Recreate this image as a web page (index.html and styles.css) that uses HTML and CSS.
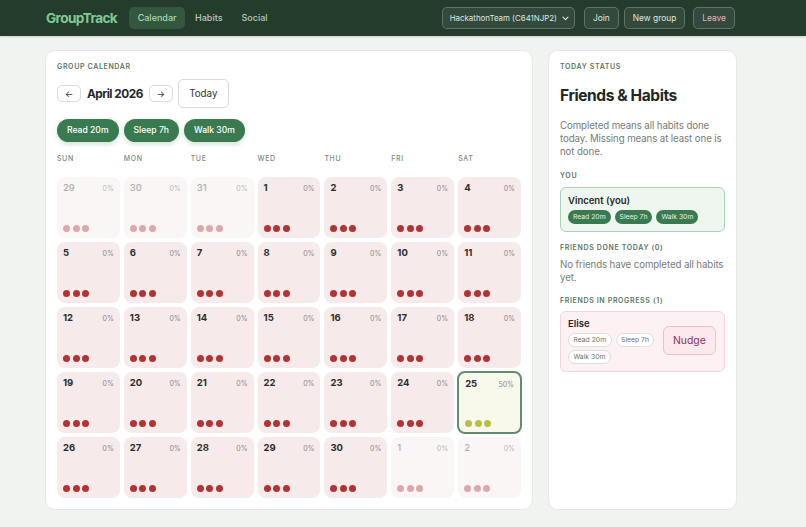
FILE: index.html
```html
<!DOCTYPE html>
<html lang="en">
<head>
<meta charset="utf-8">
<title>GroupTrack</title>
<link rel="stylesheet" href="styles.css">
</head>
<body>
<header class="topbar">
  <div class="wrap topbar-inner">
    <div class="brand-nav">
      <span class="brand">GroupTrack</span>
      <nav class="tabs">
        <span class="tab active">Calendar</span>
        <span class="tab">Habits</span>
        <span class="tab">Social</span>
      </nav>
    </div>
    <div class="actions">
      <span class="select">HackathonTeam (C641NJP2)
        <svg class="chev" width="7" height="5" viewBox="0 0 7 5"><path d="M1 1.2 L3.5 3.7 L6 1.2" fill="none" stroke="#d6e2d9" stroke-width="1.2" stroke-linecap="round" stroke-linejoin="round"/></svg>
      </span>
      <span class="tbtn">Join</span>
      <span class="tbtn">New group</span>
      <span class="tbtn leave">Leave</span>
    </div>
  </div>
</header>

<main class="wrap main">
  <section class="card cal">
    <div class="label">Group calendar</div>
    <div class="monthrow">
      <span class="arrow">&larr;</span>
      <span class="month">April 2026</span>
      <span class="arrow">&rarr;</span>
      <span class="today-btn">Today</span>
    </div>
    <div class="habits">
      <span class="hpill">Read 20m</span>
      <span class="hpill">Sleep 7h</span>
      <span class="hpill">Walk 30m</span>
    </div>
    <div class="dow">
      <span>Sun</span><span>Mon</span><span>Tue</span><span>Wed</span><span>Thu</span><span>Fri</span><span>Sat</span>
    </div>
    <div class="grid">
      <div class="cell other"><div class="ctop"><b>29</b><i>0%</i></div><div class="dots"><s></s><s></s><s></s></div></div>
      <div class="cell other"><div class="ctop"><b>30</b><i>0%</i></div><div class="dots"><s></s><s></s><s></s></div></div>
      <div class="cell other"><div class="ctop"><b>31</b><i>0%</i></div><div class="dots"><s></s><s></s><s></s></div></div>
      <div class="cell"><div class="ctop"><b>1</b><i>0%</i></div><div class="dots"><s></s><s></s><s></s></div></div>
      <div class="cell"><div class="ctop"><b>2</b><i>0%</i></div><div class="dots"><s></s><s></s><s></s></div></div>
      <div class="cell"><div class="ctop"><b>3</b><i>0%</i></div><div class="dots"><s></s><s></s><s></s></div></div>
      <div class="cell"><div class="ctop"><b>4</b><i>0%</i></div><div class="dots"><s></s><s></s><s></s></div></div>

      <div class="cell"><div class="ctop"><b>5</b><i>0%</i></div><div class="dots"><s></s><s></s><s></s></div></div>
      <div class="cell"><div class="ctop"><b>6</b><i>0%</i></div><div class="dots"><s></s><s></s><s></s></div></div>
      <div class="cell"><div class="ctop"><b>7</b><i>0%</i></div><div class="dots"><s></s><s></s><s></s></div></div>
      <div class="cell"><div class="ctop"><b>8</b><i>0%</i></div><div class="dots"><s></s><s></s><s></s></div></div>
      <div class="cell"><div class="ctop"><b>9</b><i>0%</i></div><div class="dots"><s></s><s></s><s></s></div></div>
      <div class="cell"><div class="ctop"><b>10</b><i>0%</i></div><div class="dots"><s></s><s></s><s></s></div></div>
      <div class="cell"><div class="ctop"><b>11</b><i>0%</i></div><div class="dots"><s></s><s></s><s></s></div></div>

      <div class="cell"><div class="ctop"><b>12</b><i>0%</i></div><div class="dots"><s></s><s></s><s></s></div></div>
      <div class="cell"><div class="ctop"><b>13</b><i>0%</i></div><div class="dots"><s></s><s></s><s></s></div></div>
      <div class="cell"><div class="ctop"><b>14</b><i>0%</i></div><div class="dots"><s></s><s></s><s></s></div></div>
      <div class="cell"><div class="ctop"><b>15</b><i>0%</i></div><div class="dots"><s></s><s></s><s></s></div></div>
      <div class="cell"><div class="ctop"><b>16</b><i>0%</i></div><div class="dots"><s></s><s></s><s></s></div></div>
      <div class="cell"><div class="ctop"><b>17</b><i>0%</i></div><div class="dots"><s></s><s></s><s></s></div></div>
      <div class="cell"><div class="ctop"><b>18</b><i>0%</i></div><div class="dots"><s></s><s></s><s></s></div></div>

      <div class="cell"><div class="ctop"><b>19</b><i>0%</i></div><div class="dots"><s></s><s></s><s></s></div></div>
      <div class="cell"><div class="ctop"><b>20</b><i>0%</i></div><div class="dots"><s></s><s></s><s></s></div></div>
      <div class="cell"><div class="ctop"><b>21</b><i>0%</i></div><div class="dots"><s></s><s></s><s></s></div></div>
      <div class="cell"><div class="ctop"><b>22</b><i>0%</i></div><div class="dots"><s></s><s></s><s></s></div></div>
      <div class="cell"><div class="ctop"><b>23</b><i>0%</i></div><div class="dots"><s></s><s></s><s></s></div></div>
      <div class="cell"><div class="ctop"><b>24</b><i>0%</i></div><div class="dots"><s></s><s></s><s></s></div></div>
      <div class="cell today"><div class="ctop"><b>25</b><i>50%</i></div><div class="dots"><s></s><s></s><s></s></div></div>

      <div class="cell"><div class="ctop"><b>26</b><i>0%</i></div><div class="dots"><s></s><s></s><s></s></div></div>
      <div class="cell"><div class="ctop"><b>27</b><i>0%</i></div><div class="dots"><s></s><s></s><s></s></div></div>
      <div class="cell"><div class="ctop"><b>28</b><i>0%</i></div><div class="dots"><s></s><s></s><s></s></div></div>
      <div class="cell"><div class="ctop"><b>29</b><i>0%</i></div><div class="dots"><s></s><s></s><s></s></div></div>
      <div class="cell"><div class="ctop"><b>30</b><i>0%</i></div><div class="dots"><s></s><s></s><s></s></div></div>
      <div class="cell other"><div class="ctop"><b>1</b><i>0%</i></div><div class="dots"><s></s><s></s><s></s></div></div>
      <div class="cell other"><div class="ctop"><b>2</b><i>0%</i></div><div class="dots"><s></s><s></s><s></s></div></div>
    </div>
  </section>

  <aside class="card side">
    <div class="label">Today status</div>
    <h1 class="title">Friends &amp; Habits</h1>
    <p class="desc">Completed means all habits done today. Missing means at least one is not done.</p>
    <div class="label sub">You</div>
    <div class="me">
      <div class="name">Vincent (you)</div>
      <div class="mini-row">
        <span class="mpill">Read 20m</span>
        <span class="mpill">Sleep 7h</span>
        <span class="mpill">Walk 30m</span>
      </div>
    </div>
    <div class="label sub2">Friends done today (0)</div>
    <p class="desc none">No friends have completed all habits yet.</p>
    <div class="label sub3">Friends in progress (1)</div>
    <div class="friend">
      <div class="finfo">
        <div class="name">Elise</div>
        <div class="opills">
          <span class="opill">Read 20m</span>
          <span class="opill">Sleep 7h</span>
          <span class="opill">Walk 30m</span>
        </div>
      </div>
      <span class="nudge">Nudge</span>
    </div>
  </aside>
</main>
</body>
</html>
```

FILE: styles.css
```css
* { box-sizing: border-box; }
html, body { margin: 0; padding: 0; }
body {
  background: #f1f3f0;
  font-family: Inter, "Noto Sans", sans-serif;
  color: #2a2f2b;
  height: 527px;
  overflow: hidden;
}
.wrap {
  width: 692px;
  margin-left: 45px;
}
.topbar {
  background: #243c2c;
  height: 36px;
  box-shadow: 0 1px 2px rgba(0,0,0,0.15);
}
.topbar-inner {
  height: 36px;
  display: flex;
  align-items: center;
  justify-content: space-between;
  padding-right: 2px;
}
.brand-nav { display: flex; align-items: center; }
.brand {
  color: #7fcb93;
  font-weight: 700;
  font-size: 13.6px;
  letter-spacing: -0.6px;
  margin-left: 1px;
  margin-right: 12px;
}
.tabs { display: flex; align-items: center; gap: 1px; }
.tab {
  font-size: 9px;
  font-weight: 500;
  color: #b9c9bd;
  padding: 0 9px;
  height: 22px;
  line-height: 22px;
  border-radius: 5px;
}
.tab.active {
  background: #33573f;
  color: #a8d8b4;
  padding: 0 8.5px;
}
.actions { display: flex; align-items: center; gap: 5px; }
.select, .tbtn {
  height: 22px;
  line-height: 20px;
  border: 1px solid rgba(255,255,255,0.22);
  background: rgba(255,255,255,0.07);
  border-radius: 5px;
  font-size: 8.4px;
  color: #dfe8e1;
  padding: 0 8px;
  white-space: nowrap;
  min-width: 31px;
  text-align: center;
}
.select {
  padding: 0 5px 0 7px;
  display: flex;
  align-items: center;
  gap: 5px;
  margin-right: 4px;
  font-size: 7.9px;
}
.chev { display: block; }
.tbtn.leave { color: #e3b4c1; margin-left: 3px; }

.main {
  display: flex;
  gap: 15px;
  margin-top: 14px;
}
.card {
  background: #fff;
  border: 1px solid #e5e8e4;
  border-radius: 10px;
  height: 460px;
}
.cal { width: 488px; padding: 11px 11px 0 11px; }
.side { width: 189px; padding: 11px 11px 0 11px; }

.label {
  font-size: 7px;
  font-weight: 600;
  letter-spacing: 0.65px;
  text-transform: uppercase;
  color: #5b7563;
  line-height: 10px;
}
.monthrow {
  display: flex;
  align-items: center;
  margin-top: 7px;
  height: 29px;
}
.arrow {
  width: 24px;
  height: 17px;
  border: 1px solid #d9dcd8;
  border-radius: 5px;
  display: flex;
  align-items: center;
  justify-content: center;
  font-size: 9px;
  color: #333;
  background: #fff;
}
.month {
  font-size: 11.8px;
  font-weight: 700;
  letter-spacing: -0.5px;
  color: #23282a;
  margin: 0 6px 0 6px;
}
.today-btn {
  margin-left: 5px;
  width: 51px;
  height: 29px;
  border: 1px solid #d9dcd8;
  border-radius: 5px;
  display: flex;
  align-items: center;
  justify-content: center;
  font-size: 9.8px;
  color: #333;
}
.habits {
  display: flex;
  gap: 5px;
  margin-top: 11px;
}
.hpill {
  background: #3a7a51;
  color: #fff;
  font-size: 8.6px;
  font-weight: 500;
  height: 23px;
  line-height: 23px;
  padding: 0 10px;
  border-radius: 12px;
  box-shadow: 0 2px 5px rgba(58,122,81,0.25);
}
.dow {
  display: grid;
  grid-template-columns: repeat(7, 1fr);
  gap: 4px;
  margin-top: 12px;
  font-size: 7px;
  font-weight: 500;
  letter-spacing: 0.6px;
  text-transform: uppercase;
  color: #7c8a81;
  line-height: 10px;
}
.grid {
  display: grid;
  grid-template-columns: repeat(7, 1fr);
  grid-auto-rows: 61px;
  gap: 4px;
  margin-top: 13px;
}
.cell {
  background: #f6eaea;
  border-radius: 8px;
  padding: 5px 6px 6px 6px;
  display: flex;
  flex-direction: column;
  justify-content: space-between;
}
.ctop { display: flex; justify-content: space-between; align-items: baseline; }
.ctop b { font-size: 9.5px; font-weight: 700; color: #2b2f2c; }
.ctop i { font-style: normal; font-size: 7px; color: #8a8a8a; }
.dots { display: flex; gap: 2.5px; }
.dots s { width: 7px; height: 7px; border-radius: 50%; background: #b23333; display: block; }
.cell.other { background: #faf6f5; }
.cell.other .ctop b { color: #b3aeae; font-weight: 500; }
.cell.other .ctop i { color: #bdb8b8; }
.cell.other .dots s { background: #dba9ac; }
.cell.today {
  background: #f8f8eb;
  border: 2px solid #5e8e6c;
  padding: 5px 6px 5px 6px;
  margin: -1px;
}
.cell.today .dots s { background: #bcbd46; }

.title {
  font-size: 15.5px;
  font-weight: 700;
  letter-spacing: -0.4px;
  color: #222725;
  margin: 14px 0 0 0;
  line-height: 20px;
}
.desc {
  font-size: 9.7px;
  line-height: 13px;
  letter-spacing: -0.1px;
  color: #767c78;
  margin: 13px -3px 0 0;
}
.sub { margin-top: 13px; }
.me {
  margin-top: 6px;
  background: #eef6ef;
  border: 1px solid #a9d2b5;
  border-radius: 6px;
  padding: 7px 7px 6px 7px;
  height: 45px;
}
.name { font-size: 9.5px; font-weight: 600; color: #252a27; line-height: 12px; }
.mini-row { display: flex; gap: 4px; margin-top: 3px; }
.mpill {
  background: #3a7a51;
  color: #e6f0e8;
  font-size: 6.8px;
  height: 14px;
  line-height: 14px;
  padding: 0 5px;
  border-radius: 7px;
}
.sub2 { margin-top: 11px; }
.none { margin-top: 5px; }
.sub3 { margin-top: 12px; }
.friend {
  margin-top: 5px;
  background: #fdf1f3;
  border: 1px solid #f2d6dc;
  border-radius: 6px;
  padding: 6px 7px 7px 7px;
  height: 61px;
  display: flex;
  align-items: center;
  justify-content: space-between;
}
.finfo { width: 96px; align-self: flex-start; }
.opills { display: flex; flex-wrap: wrap; gap: 3px 4px; margin-top: 3px; }
.opill {
  background: #fff;
  border: 1px solid #e0dcdc;
  color: #6e706f;
  font-size: 6.8px;
  height: 14px;
  line-height: 12px;
  padding: 0 4.5px;
  border-radius: 7px;
}
.nudge {
  width: 54px;
  height: 29px;
  border: 1px solid #e7c4cd;
  background: #fbe9ed;
  border-radius: 6px;
  color: #8b3354;
  font-size: 10.4px;
  display: flex;
  align-items: center;
  justify-content: center;
  margin-right: 1px;
  margin-top: -1px;
}
```
